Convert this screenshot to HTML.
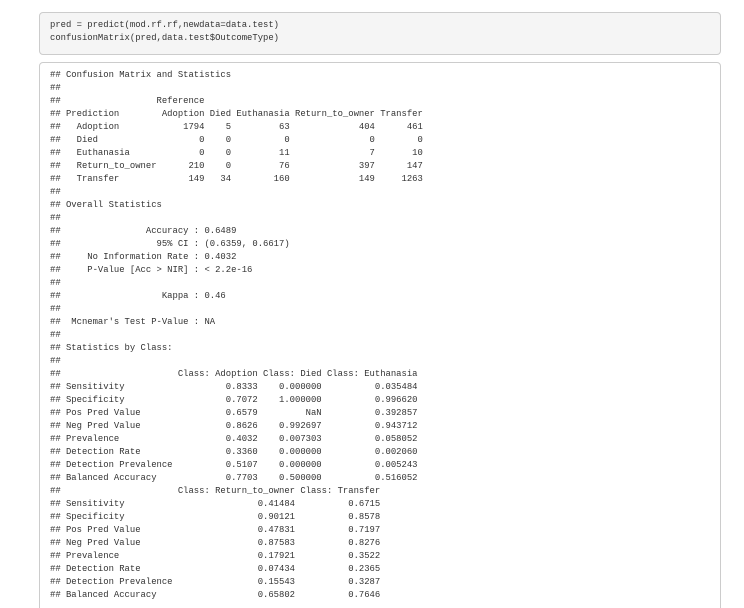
<!DOCTYPE html>
<html><head><style>
html,body{margin:0;background:#fff;width:744px;height:608px;overflow:hidden;}
#wrap{position:relative;width:744px;height:608px;overflow:hidden;}
pre{font-family:"Liberation Mono",monospace;font-size:8.88px;line-height:13px;color:#333;margin:0;position:absolute;left:39px;width:661px;border:1px solid #ccc;border-radius:4px;padding:6px 9px 6px 10px;white-space:pre;}
.code{top:12px;height:29px;background:#f5f5f5;}
.out{top:62px;height:560px;background:#fff;}
</style></head><body><div id="wrap">
<pre class="code">pred = predict(mod.rf.rf,newdata=data.test)
confusionMatrix(pred,data.test$OutcomeType)</pre>
<pre class="out">## Confusion Matrix and Statistics
## 
##                  Reference
## Prediction        Adoption Died Euthanasia Return_to_owner Transfer
##   Adoption            1794    5         63             404      461
##   Died                   0    0          0               0        0
##   Euthanasia             0    0         11               7       10
##   Return_to_owner      210    0         76             397      147
##   Transfer             149   34        160             149     1263
## 
## Overall Statistics
##                                           
##                Accuracy : 0.6489          
##                  95% CI : (0.6359, 0.6617)
##     No Information Rate : 0.4032          
##     P-Value [Acc &gt; NIR] : &lt; 2.2e-16       
##                                           
##                   Kappa : 0.46            
##                                           
##  Mcnemar's Test P-Value : NA              
## 
## Statistics by Class:
## 
##                      Class: Adoption Class: Died Class: Euthanasia
## Sensitivity                   0.8333    0.000000          0.035484
## Specificity                   0.7072    1.000000          0.996620
## Pos Pred Value                0.6579         NaN          0.392857
## Neg Pred Value                0.8626    0.992697          0.943712
## Prevalence                    0.4032    0.007303          0.058052
## Detection Rate                0.3360    0.000000          0.002060
## Detection Prevalence          0.5107    0.000000          0.005243
## Balanced Accuracy             0.7703    0.500000          0.516052
##                      Class: Return_to_owner Class: Transfer
## Sensitivity                         0.41484          0.6715
## Specificity                         0.90121          0.8578
## Pos Pred Value                      0.47831          0.7197
## Neg Pred Value                      0.87583          0.8276
## Prevalence                          0.17921          0.3522
## Detection Rate                      0.07434          0.2365
## Detection Prevalence                0.15543          0.3287
## Balanced Accuracy                   0.65802          0.7646</pre>
</div></body></html>
